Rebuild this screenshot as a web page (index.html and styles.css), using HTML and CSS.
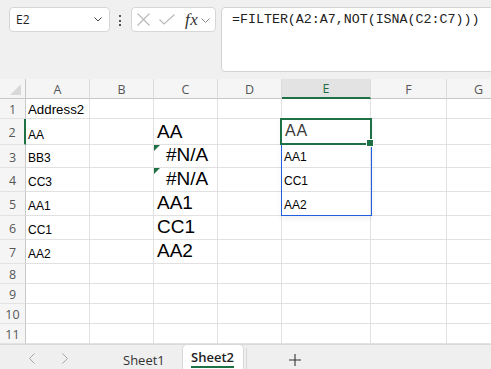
FILE: index.html
```html
<!DOCTYPE html>
<html>
<head>
<meta charset="utf-8">
<link rel="stylesheet" href="styles.css">
</head>
<body>
<div class="app">
  <div class="toolbar">
    <div class="namebox">
      <span class="nb-text">E2</span>
      <svg class="chev" width="8" height="5" viewBox="0 0 8 5"><polyline points="0.5,0.5 4,4 7.5,0.5" fill="none" stroke="#444" stroke-width="1"/></svg>
    </div>
    <div class="dots"><i></i><i></i><i></i></div>
    <div class="fxbox">
      <svg class="ico-x" width="13" height="13" viewBox="0 0 13 13"><path d="M0.5 0.5 L12.5 12.5 M12.5 0.5 L0.5 12.5" stroke="#b8b8b8" stroke-width="1.1" fill="none"/></svg>
      <svg class="ico-check" width="16" height="11" viewBox="0 0 16 11"><polyline points="0.5,5.5 5,10 15.5,0.5" fill="none" stroke="#b8b8b8" stroke-width="1.1"/></svg>
      <span class="fx">fx</span>
      <svg class="chev2" width="9" height="5" viewBox="0 0 9 5"><polyline points="0.5,0.5 4.5,4.5 8.5,0.5" fill="none" stroke="#888" stroke-width="1"/></svg>
    </div>
    <div class="formula">=FILTER(A2:A7,NOT(ISNA(C2:C7)))</div>
  </div>

  <div class="sheet">
    <div class="h corner"><svg width="12" height="12" viewBox="0 0 12 12"><polygon points="11,0 11,11 0,11" fill="#d9d9d9"/></svg></div>
    <div class="h col">A</div><div class="h col">B</div><div class="h col">C</div><div class="h col">D</div><div class="h col sel">E</div><div class="h col">F</div><div class="h col">G</div>

    <div class="h row">1</div><div class="c t13">Address2</div><div class="c"></div><div class="c"></div><div class="c"></div><div class="c"></div><div class="c"></div><div class="c"></div>

    <div class="h row rsel">2</div><div class="c">AA</div><div class="c"></div><div class="c big">AA</div><div class="c"></div><div class="c e2">AA</div><div class="c"></div><div class="c"></div>

    <div class="h row">3</div><div class="c">BB3</div><div class="c"></div><div class="c big err">#N/A</div><div class="c"></div><div class="c"></div><div class="c"></div><div class="c"></div>

    <div class="h row">4</div><div class="c">CC3</div><div class="c"></div><div class="c big err">#N/A</div><div class="c"></div><div class="c"></div><div class="c"></div><div class="c"></div>

    <div class="h row">5</div><div class="c">AA1</div><div class="c"></div><div class="c big">AA1</div><div class="c"></div><div class="c"></div><div class="c"></div><div class="c"></div>

    <div class="h row">6</div><div class="c">CC1</div><div class="c"></div><div class="c big">CC1</div><div class="c"></div><div class="c"></div><div class="c"></div><div class="c"></div>

    <div class="h row">7</div><div class="c">AA2</div><div class="c"></div><div class="c big">AA2</div><div class="c"></div><div class="c"></div><div class="c"></div><div class="c"></div>

    <div class="h row">8</div><div class="c"></div><div class="c"></div><div class="c"></div><div class="c"></div><div class="c"></div><div class="c"></div><div class="c"></div>
    <div class="h row">9</div><div class="c"></div><div class="c"></div><div class="c"></div><div class="c"></div><div class="c"></div><div class="c"></div><div class="c"></div>
    <div class="h row">10</div><div class="c"></div><div class="c"></div><div class="c"></div><div class="c"></div><div class="c"></div><div class="c"></div><div class="c"></div>
    <div class="h row">11</div><div class="c"></div><div class="c"></div><div class="c"></div><div class="c"></div><div class="c"></div><div class="c"></div><div class="c"></div>

    <div class="spill">
      <div class="sp-item">AA1</div>
      <div class="sp-item">CC1</div>
      <div class="sp-item">AA2</div>
    </div>
    <div class="active"><span class="handle"></span></div>
  </div>

  <div class="tabs">
    <div class="nav">
      <svg width="6" height="11" viewBox="0 0 6 11"><polyline points="5.5,0.5 0.5,5.5 5.5,10.5" fill="none" stroke="#a6a6a6" stroke-width="1"/></svg>
      <svg width="6" height="11" viewBox="0 0 6 11"><polyline points="0.5,0.5 5.5,5.5 0.5,10.5" fill="none" stroke="#a6a6a6" stroke-width="1"/></svg>
    </div>
    <div class="tab">Sheet1</div>
    <div class="tab on"><span>Sheet2</span></div>
    <div class="rest">
      <svg class="plus" width="12" height="12" viewBox="0 0 12 12"><path d="M6 0 V12 M0 6 H12" stroke="#333" stroke-width="1.1" fill="none"/></svg>
    </div>
  </div>
</div>
</body>
</html>
```

FILE: styles.css
```css
* { box-sizing: border-box; }
html, body { margin: 0; padding: 0; }
body { background: #f0f0f0; font-family: "Liberation Sans", Arial, sans-serif; overflow: hidden; }
.app { width: 491px; height: 369px; overflow: hidden; display: flex; flex-direction: column; }

.toolbar { height: 79px; flex: none; display: flex; align-items: flex-start; padding: 7px 0 0 9px; background: #f0f0f0; }
.namebox { width: 101px; height: 25px; background: #fff; border: 1px solid #d6d6d6; border-radius: 4px; display: flex; align-items: center; justify-content: space-between; padding: 0 7px 0 6px; }
.nb-text { font-family: "Open Sans", sans-serif; font-size: 12px; color: #222; }
.dots { width: 2px; margin: 8px 0 0 9px; display: flex; flex-direction: column; gap: 2.5px; }
.dots i { display: block; width: 2px; height: 2px; background: #555; }
.fxbox { width: 85px; height: 25px; margin-left: 10px; background: #fff; border: 1px solid #d6d6d6; border-radius: 4px; display: flex; align-items: center; padding-left: 5px; }
.ico-x { margin-right: 9px; }
.ico-check { margin-right: 10px; }
.fx { font-family: "Liberation Serif", "DejaVu Serif", serif; font-style: italic; font-size: 17px; color: #333; margin-right: 3px; letter-spacing: 0.5px; }
.chev2 { margin-top: 1px; }
.formula { flex: 1; height: 65px; margin-left: 5px; margin-right: -6px; background: #fff; border: 1px solid #d3d3d3; border-radius: 4px; font-family: "Liberation Mono", monospace; font-size: 13.3px; line-height: 16px; color: #222; padding: 4px 0 0 10px; }

.sheet { position: relative; flex: none; width: 560px; display: grid; grid-template-columns: 26px 64px 64px 64px 64px 89px 76px 64px 50px; grid-template-rows: 20px 20px 26px 23px 24px 24px 24px 24px 20px 20px 20px 20px; background: #fff; }
.h { background: #f5f5f5; font-family: "Open Sans", sans-serif; font-size: 12.5px; color: #555; display: flex; align-items: center; justify-content: center; border-right: 1px solid #dcdcdc; border-bottom: 1px solid #dcdcdc; }
.corner { grid-column: 1; border-right: 1px solid #c8c8c8; border-bottom: 1px solid #c8c8c8; align-items: flex-end; justify-content: flex-end; padding: 0 3px 2px 0; }
.col { border-bottom: 1px solid #c8c8c8; padding-top: 1px; }
.col:nth-child(9) { grid-column: 8 / span 2; }
.col.sel { background: #e3e3e3; color: #1d6e3f; border-bottom: 2px solid #1e7145; }
.row { grid-column: 1; border-right: 1px solid #c8c8c8; border-bottom-color: #e2e2e2; padding-top: 2px; }
.row.rsel { border-right: 2px solid #1e7145; }
.c { border-right: 1px solid #e1e1e1; border-bottom: 1px solid #e1e1e1; display: flex; align-items: flex-end; padding: 0 2px 2px 2px; font-size: 12px; color: #000; white-space: nowrap; position: relative; }
.c:nth-child(8n+1) { grid-column: 8 / span 2; }
.t13 { font-size: 13.3px; padding-bottom: 1px; }
.big { font-size: 19px; padding-bottom: 1px; padding-left: 3px; }
.big.err { justify-content: center; padding-left: 5px; }
.err::before { content: ""; position: absolute; left: 0; top: 0; width: 0; height: 0; border-top: 6px solid #1e7145; border-right: 6px solid transparent; }
.e2 { align-items: center; padding: 0 3px 1px 3px; font-size: 16px; letter-spacing: 0.8px; color: #3a3a3a; }

.spill { position: absolute; left: 281px; top: 39px; width: 91px; height: 98px; border: 1px solid #1f5fe0; box-shadow: 0 3px 6px rgba(0,0,0,0.06); padding-top: 26px; }
.sp-item { height: 24px; display: flex; align-items: flex-end; padding: 0 0 4px 2px; font-size: 12px; color: #000; }
.sp-item:first-child { height: 23px; }
.active { position: absolute; left: 280px; top: 39px; width: 92px; height: 27px; border: 2px solid #1e7145; }
.handle { position: absolute; right: -4px; bottom: -4px; width: 6px; height: 6px; background: #1e7145; border: 1px solid #fff; box-sizing: content-box; }

.tabs { flex: 1; display: flex; background: #efefef; border-top: 1px solid #dadada; font-family: "Open Sans", sans-serif; font-size: 13px; color: #333; }
.nav { width: 108px; display: flex; align-items: center; gap: 27px; padding: 2px 0 0 29px; }
.tab { padding: 6px 0 0 15px; width: 74px; }
.tab.on { width: 62px; margin-top: -1px; background: #fff; border: 1px solid #d8d8d8; border-bottom: none; border-radius: 5px 5px 0 0; padding: 3px 0 0 8px; font-weight: 600; color: #222; }
.tab.on span { display: inline-block; border-bottom: 2.5px solid #1e7145; line-height: 16px; padding-bottom: 1px; }
.rest { flex: 1; margin-left: 2px; border-left: 1px solid #d8d8d8; margin-top: 3px; position: relative; }
.plus { position: absolute; left: 42px; top: 6px; }
```
